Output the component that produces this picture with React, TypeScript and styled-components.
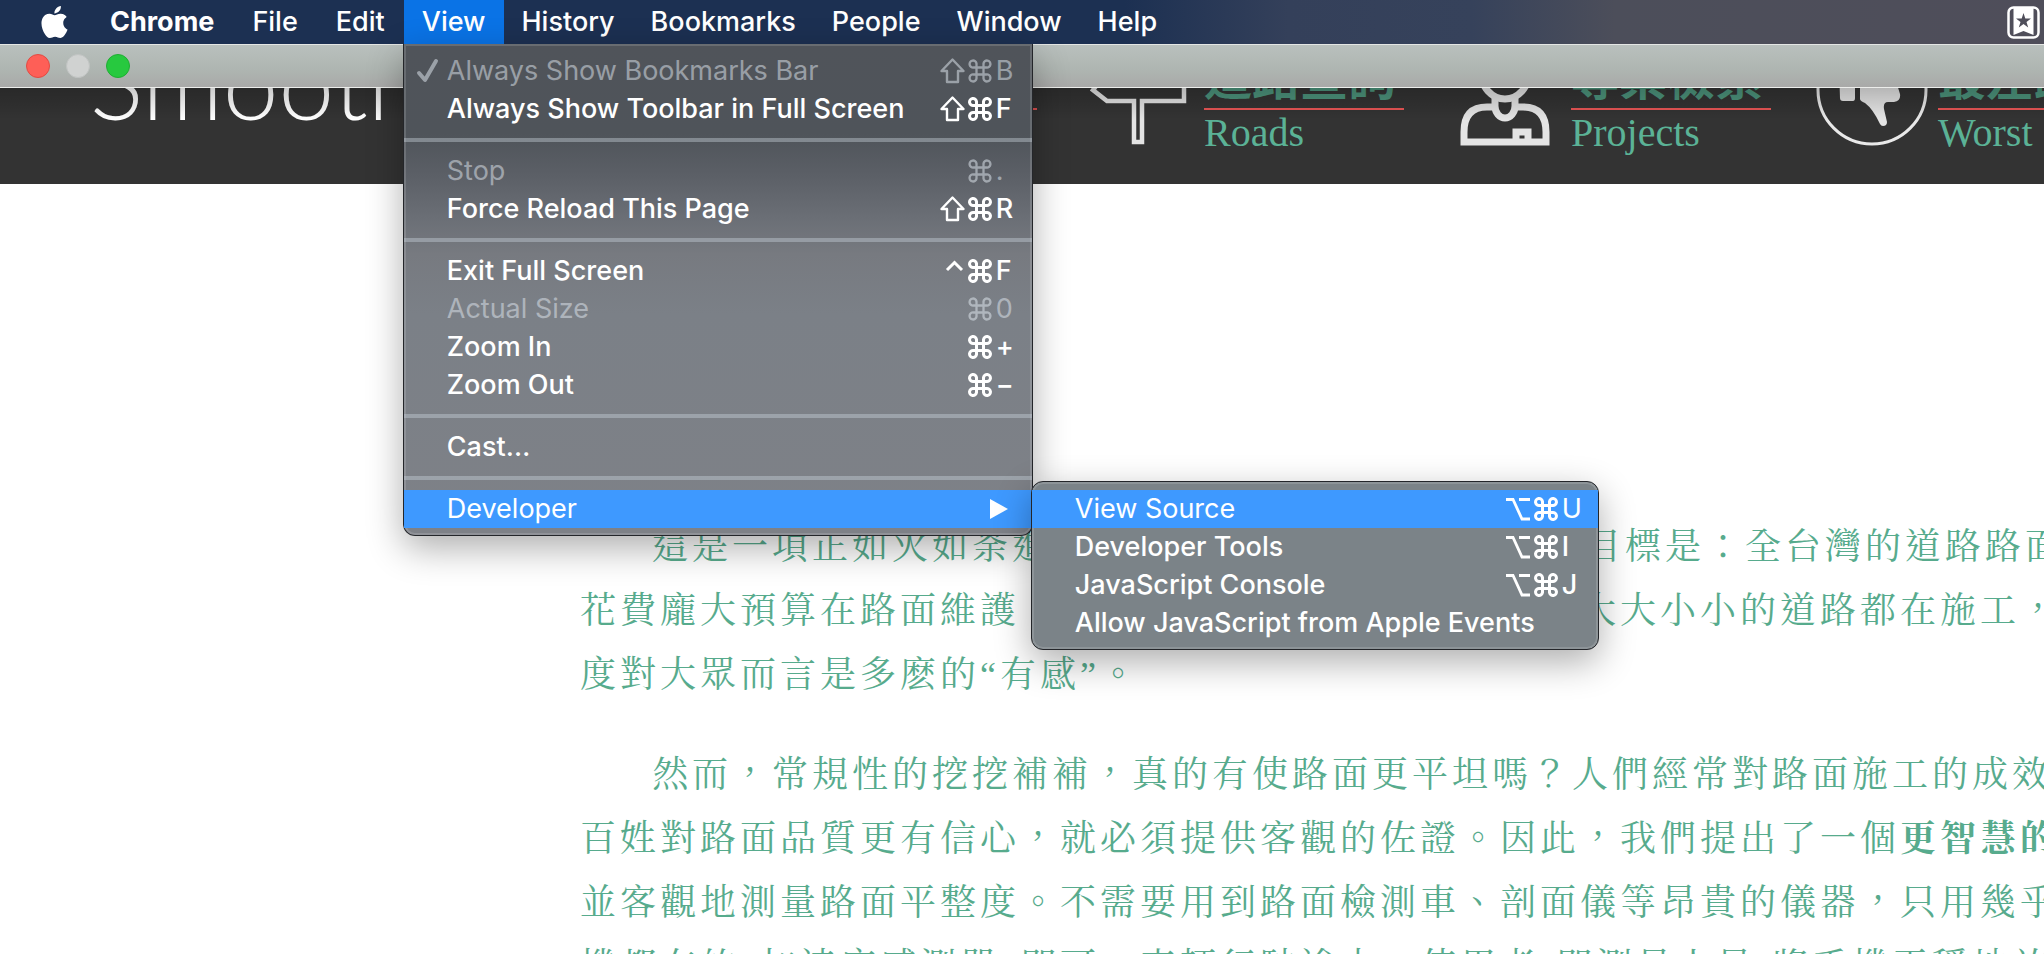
import React from 'react';
import styled, { createGlobalStyle } from 'styled-components';

const ui = `Inter, "Liberation Sans", sans-serif`;
const serifCjk = `"Liberation Serif", "Noto Serif CJK TC", "Noto Sans CJK TC", serif`;

const GlobalStyle = createGlobalStyle`
  * { box-sizing: border-box; }
  body { margin: 0; background: #fff; font-family: ${ui}; }
  button { font: inherit; color: inherit; border: 0; background: none; padding: 0; margin: 0; text-align: left; white-space: nowrap; }
`;

const Screen = styled.div`
  height: 100vh;
  overflow: hidden;
`;

const MenuBar = styled.nav`
  display: flex;
  align-items: stretch;
  height: 44px;
  padding-left: 41px;
  padding-right: 4px;
  color: #fff;
  font-size: 27px;
  line-height: 44px;
  background: linear-gradient(90deg, #1c3052 0%, #1c3052 55%, #34405a 63%, #36425b 72%, #4c4e5a 79%, #4f4e5a 100%);
`;

const AppleSlot = styled.button`
  display: flex;
  align-items: center;
  margin-right: 23px;
`;

const MenuGroup = styled.div<{ $gutter: number }>`
  display: flex;

  > button {
    padding: 0 ${(p) => p.$gutter}px;
  }
`;

const MenuTitle = styled.button<{ $bold?: boolean; $open?: boolean }>`
  font-weight: ${(p) => (p.$bold ? 700 : 500)};
  background: ${(p) => (p.$open ? '#0a73e6' : 'transparent')};
`;

const ViewMenu = styled(MenuGroup)`
  position: relative;
`;

const Spacer = styled.div`
  flex: 1;
`;

const StatusButton = styled.button`
  display: flex;
  align-items: center;
`;

const TitleBar = styled.div`
  display: flex;
  align-items: center;
  gap: 16px;
  height: 44px;
  padding-left: 26px;
  border-top: 1px solid #e4e6e4;
  border-bottom: 1px solid #ecedeb;
  background: linear-gradient(180deg, #b9c0bd, #aeb5b1 60%, #a9a9a8);
`;

const Light = styled.button<{ $color: string; $edge: string }>`
  width: 24px;
  height: 24px;
  border-radius: 50%;
  border: 1px solid ${(p) => p.$edge};
  background: ${(p) => p.$color};
`;

const Header = styled.header`
  position: relative;
  display: flex;
  align-items: flex-end;
  height: 96px;
  padding: 0 0 38px 90px;
  overflow: hidden;
  background: #333;

  &::after {
    content: '';
    position: absolute;
    inset: 0 0 auto 0;
    height: 32px;
    background: linear-gradient(180deg, rgba(0, 0, 0, 0.2), rgba(0, 0, 0, 0));
  }
`;

const Brand = styled.a`
  width: 747px;
  flex: none;
  margin-bottom: 41px;
  color: #fff;
  font-family: Lato, sans-serif;
  font-weight: 300;
  font-size: 100px;
  line-height: 48px;
  text-decoration: none;
`;

const SiteNav = styled.nav`
  display: flex;
  gap: 45px;
`;

const SiteLink = styled.a`
  display: flex;
  align-items: flex-end;
  gap: 10px;
  flex: none;
  text-decoration: none;
  color: #5bb296;
`;

const IconBox = styled.svg`
  width: 112px;
  height: 112px;
  flex: none;
`;

const LinkText = styled.span`
  display: flex;
  flex-direction: column;
  width: 200px;
  height: 112px;
  justify-content: flex-end;
`;

const LinkTitle = styled.span`
  font-family: "Noto Sans CJK TC", sans-serif;
  font-weight: 700;
  font-size: 48px;
  line-height: 68px;
  min-height: 70px;
  color: #4d957d;
  border-bottom: 2px solid #e85555;
  white-space: nowrap;
`;

const LinkSub = styled.span`
  height: 36px;
  font-family: "Liberation Serif", serif;
  font-size: 40px;
  line-height: 46px;
`;

const Article = styled.main`
  padding: 331px 0 0 580px;
  color: #57ab8d;
  font-family: ${serifCjk};
  font-size: 36px;
  line-height: 64px;
  letter-spacing: 4px;
  white-space: nowrap;
`;

const Paragraph = styled.p`
  margin: 0 0 36px;
  text-indent: 2em;
`;

const Panel = styled.div`
  position: absolute;
  z-index: 2;
  padding: 8px 0 7px;
  color: #fff;
  line-height: 38px;
  border: 1px solid #24262a;
  box-shadow: inset 0 0 0 2px rgba(255, 255, 255, 0.14), 0 12px 36px rgba(0, 0, 0, 0.32);
`;

const ViewPanel = styled(Panel)`
  top: 44px;
  left: -1px;
  width: 630px;
  border-top: 0;
  border-radius: 0 0 12px 12px;
  background: linear-gradient(180deg, #50545a 0, #4f545a 90px, #5b5f66 130px, #6b6f76 175px, #777a80 210px, #7b8087 270px, #7e8187 100%);
`;

const SourcePanel = styled(Panel)`
  top: 481px;
  left: 627px;
  width: 568px;
  border-radius: 12px;
  background: #7b8388;
`;

const Row = styled.button<{ $dim?: boolean; $active?: boolean }>`
  display: flex;
  align-items: center;
  width: 100%;
  height: 38px;
  padding: 0 16px 0 12px;
  font-weight: ${(p) => (p.$dim || p.$active ? 400 : 500)};
  color: ${(p) => (p.$dim ? 'rgba(225, 232, 240, 0.52)' : '#fff')};
  background: ${(p) => (p.$active ? '#3e99ff' : 'transparent')};
`;

const CheckSlot = styled.span`
  display: flex;
  width: 31px;
  flex: none;
`;

const Label = styled.span`
  flex: 1;
`;

const Keys = styled.span`
  display: grid;
  grid-template-columns: 28px 28px 20px;
  align-items: center;
`;

const Divider = styled.hr`
  height: 4px;
  margin: 10px 0;
  border: 0;
  background: rgba(200, 210, 220, 0.42);
`;

const Glyph = styled.svg`
  display: block;
  fill: none;
  stroke: currentColor;
`;

function ModifierIcon({ name }: { name?: string }) {
  if (name === 'shift')
    return (
      <Glyph width="25" height="26" viewBox="0 0 25 26" strokeWidth="2.4" strokeLinejoin="round">
        <path d="M12.5 1.500 L23.500 13 H18 V24 H7 V13 H1.500 Z" />
      </Glyph>
    );
  if (name === 'option')
    return (
      <Glyph width="25" height="26" viewBox="0 0 25 26" strokeWidth="2.8">
        <path d="M0 3.500 H7 L16 23 H24 M13 3.500 H24" />
      </Glyph>
    );
  if (name === 'control')
    return (
      <Glyph width="25" height="26" viewBox="0 0 25 26" strokeWidth="3">
        <path d="M7 12 L14.500 4.500 L22 12" />
      </Glyph>
    );
  return <span />;
}

const CommandIcon = ({ thin }: { thin?: boolean }) => (
  <Glyph width="24" height="26" viewBox="0 0 24 26" strokeWidth={thin ? 2.3 : 3}>
    <path d="M8.500 9.500 H15.500 V16.500 H8.500 Z M8.500 9.500 H5.500 A3.500 3.500 0 1 1 8.500 5.500 Z M15.500 9.500 V5.500 A3.500 3.500 0 1 1 18.500 9.500 Z M15.500 16.500 H18.500 A3.500 3.500 0 1 1 15.500 20.500 Z M8.500 16.500 V20.500 A3.500 3.500 0 1 1 5.500 16.500 Z" />
  </Glyph>
);

type Item = { label: string; mod?: string; char?: string; dim?: boolean; active?: boolean; checked?: boolean; sub?: boolean };

const viewGroups: Item[][] = [
  [
    { label: 'Always Show Bookmarks Bar', mod: 'shift', char: 'B', dim: true, checked: true },
    { label: 'Always Show Toolbar in Full Screen', mod: 'shift', char: 'F' },
  ],
  [
    { label: 'Stop', char: '.', dim: true },
    { label: 'Force Reload This Page', mod: 'shift', char: 'R' },
  ],
  [
    { label: 'Exit Full Screen', mod: 'control', char: 'F' },
    { label: 'Actual Size', char: '0', dim: true },
    { label: 'Zoom In', char: '+' },
    { label: 'Zoom Out', char: '−' },
  ],
  [{ label: 'Cast…' }],
  [{ label: 'Developer', active: true, sub: true }],
];

const sourceItems: Item[] = [
  { label: 'View Source', mod: 'option', char: 'U', active: true },
  { label: 'Developer Tools', mod: 'option', char: 'I' },
  { label: 'JavaScript Console', mod: 'option', char: 'J' },
  { label: 'Allow JavaScript from Apple Events' },
];

function MenuRow({ item }: { item: Item }) {
  return (
    <Row role="menuitem" $dim={item.dim} $active={item.active} disabled={item.dim}>
      <CheckSlot>
        {item.checked && (
          <Glyph width="24" height="28" viewBox="0 0 24 28" strokeWidth="4" strokeLinecap="round" strokeLinejoin="round">
            <path d="M3 16 L9 23 L20 4" />
          </Glyph>
        )}
      </CheckSlot>
      <Label>{item.label}</Label>
      {item.char && (
        <Keys>
          <ModifierIcon name={item.mod} />
          <CommandIcon thin={item.dim} />
          <span>{item.char}</span>
        </Keys>
      )}
      {item.sub && (
        <svg width="26" height="20" viewBox="0 0 26 20" aria-hidden="true">
          <path d="M0 0 L18 10 L0 20 Z" fill="#fff" />
        </svg>
      )}
    </Row>
  );
}

function SignIcon() {
  return (
    <IconBox viewBox="0 0 112 112" fill="none" stroke="#e4e4e4" strokeWidth="4.5" aria-hidden="true">
      <path d="M102 20 V67 H60 V108 H52 V67 H25 L11 56 L25 38 V20 Z" />
    </IconBox>
  );
}

function WorkerIcon() {
  return (
    <IconBox viewBox="0 0 112 112" fill="none" stroke="#e4e4e4" strokeWidth="7" aria-hidden="true">
      <path d="M32 38 A24 27 0 1 0 80 38 A24 27 0 1 0 32 38 Z" />
      <path d="M46 62 V72 A10 12 0 0 0 66 72 V62" />
      <path d="M46 73 H38 Q15 73 15 98 V108 H97 V98 Q97 73 74 73 H66" />
      <path d="M67 110 V98 H79 V110" />
    </IconBox>
  );
}

function ThumbDownIcon() {
  return (
    <IconBox viewBox="0 0 112 112" fill="none" aria-hidden="true">
      <circle cx="56" cy="56" r="54" stroke="#e9e9e9" strokeWidth="3" />
      <path
        fill="#e4e4e4"
        d="M23 33 H36 Q39 33 39 36 V64 Q39 67 37 67 H27 Q24 67 24 64 Z M44 34 H76 L84 60 Q85 67 78 68 H72 Q67 68 68 75 L71 88 Q71 92 67 92 Q65 92 64 90 Q57 75 49 69 Q44 67 44 65 Z"
      />
    </IconBox>
  );
}

const links = [
  { title: '', sub: '', icon: null },
  { title: '道路查詢', sub: 'Roads', icon: <SignIcon /> },
  { title: '專案檢索', sub: 'Projects', icon: <WorkerIcon /> },
  { title: '最差路段', sub: 'Worst', icon: <ThumbDownIcon /> },
];

export default function App() {
  return (
    <Screen>
      <GlobalStyle />
      <MenuBar>
        <AppleSlot aria-label="Apple menu">
          <svg width="27" height="32" viewBox="2 0 20 24" fill="#fff">
            <path d="M12.152 6.896c-.948 0-2.415-1.078-3.960-1.040-2.040.027-3.910 1.183-4.961 3.014-2.117 3.675-.546 9.103 1.519 12.090 1.013 1.454 2.208 3.090 3.792 3.039 1.520-.065 2.090-.987 3.935-.987 1.831 0 2.350.987 3.960.948 1.637-.026 2.676-1.480 3.676-2.948 1.156-1.688 1.636-3.325 1.662-3.415-.039-.013-3.182-1.221-3.220-4.857-.026-3.040 2.480-4.494 2.597-4.559-1.429-2.090-3.623-2.324-4.390-2.376-2-.156-3.675 1.090-4.610 1.090zM15.530 3.830c.843-1.012 1.400-2.427 1.245-3.830-1.207.052-2.662.805-3.532 1.818-.780.896-1.454 2.338-1.273 3.714 1.338.104 2.715-.688 3.559-1.701" />
          </svg>
        </AppleSlot>
        <MenuGroup $gutter={19}>
          <MenuTitle $bold>Chrome</MenuTitle>
          <MenuTitle>File</MenuTitle>
          <MenuTitle>Edit</MenuTitle>
        </MenuGroup>
        <ViewMenu $gutter={18}>
          <MenuTitle $open>View</MenuTitle>
          <ViewPanel role="menu">
            {viewGroups.map((group, i) => (
              <React.Fragment key={i}>
                {i > 0 && <Divider />}
                {group.map((item) => (
                  <MenuRow key={item.label} item={item} />
                ))}
              </React.Fragment>
            ))}
          </ViewPanel>
          <SourcePanel role="menu">
            {sourceItems.map((item) => (
              <MenuRow key={item.label} item={item} />
            ))}
          </SourcePanel>
        </ViewMenu>
        <MenuGroup $gutter={18}>
          <MenuTitle>History</MenuTitle>
          <MenuTitle>Bookmarks</MenuTitle>
          <MenuTitle>People</MenuTitle>
          <MenuTitle>Window</MenuTitle>
          <MenuTitle>Help</MenuTitle>
        </MenuGroup>
        <Spacer />
        <StatusButton aria-label="Bookmarks">
          <svg width="33" height="33" viewBox="0 0 33 33">
            <rect x="1.500" y="1.500" width="30" height="30" rx="5" fill="none" stroke="#fff" strokeWidth="2.500" />
            <path d="M6.500 2 H26.500 V29 L16.500 25 L6.500 29 Z" fill="#fff" />
            <path d="M16.500 7 L18.300 12.500 H24 L19.500 16 L21.200 21.500 L16.500 18 L11.800 21.500 L13.500 16 L9 12.500 H14.700 Z" fill="#4f4e5a" />
          </svg>
        </StatusButton>
      </MenuBar>
      <TitleBar>
        <Light aria-label="Close" $color="#fe5f57" $edge="#e24b43" />
        <Light aria-label="Minimize" $color="#d0d2d1" $edge="#c0c3c2" />
        <Light aria-label="Zoom" $color="#27c93f" $edge="#1fae33" />
      </TitleBar>
      <Header>
        <Brand href="#">Smooth</Brand>
        <SiteNav>
          {links.map((link) => (
            <SiteLink href="#" key={link.sub}>
              {link.icon}
              <LinkText>
                <LinkTitle>{link.title}</LinkTitle>
                <LinkSub>{link.sub}</LinkSub>
              </LinkText>
            </SiteLink>
          ))}
        </SiteNav>
      </Header>
      <Article>
        <Paragraph>
          這是一項正如火如荼進行中的全民參與計畫， 我們的目標是：全台灣的道路路面
          <br />
          花費龐大預算在路面維護，然而每年仍然可以看到有許多大大小小的道路都在施工，
          <br />
          度對大眾而言是多麽的“有感”。
        </Paragraph>
        <Paragraph>
          然而，常規性的挖挖補補，真的有使路面更平坦嗎？人們經常對路面施工的成效
          <br />
          百姓對路面品質更有信心，就必須提供客觀的佐證。因此，我們提出了一個<b>更智慧的</b>
          <br />
          並客觀地測量路面平整度。不需要用到路面檢測車、剖面儀等昂貴的儀器，只用幾乎
          <br />
          機都有的“加速度感測器”即可，車輛行駛途中，使用者(即測量人員)將手機平穩地放
        </Paragraph>
      </Article>
    </Screen>
  );
}
